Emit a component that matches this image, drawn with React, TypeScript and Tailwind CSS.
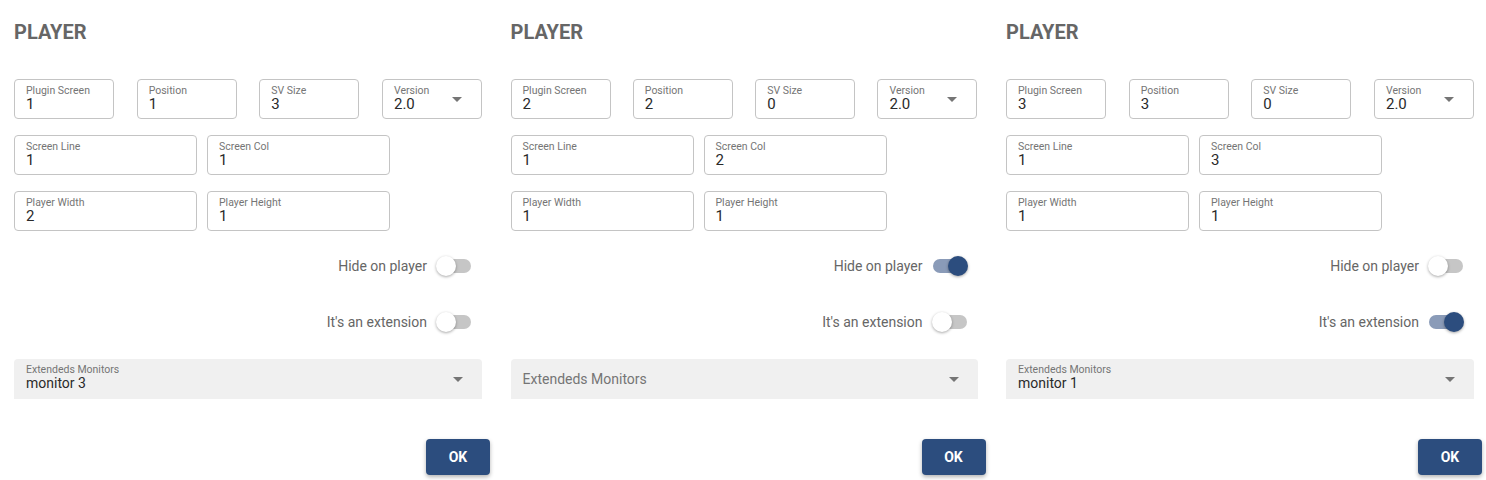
type PlayerConfig = {
  pluginScreen: string;
  position: string;
  svSize: string;
  version: string;
  screenLine: string;
  screenCol: string;
  playerWidth: string;
  playerHeight: string;
  hideOnPlayer: boolean;
  isExtension: boolean;
  monitor: string | null;
};

const players: PlayerConfig[] = [
  {
    pluginScreen: "1",
    position: "1",
    svSize: "3",
    version: "2.0",
    screenLine: "1",
    screenCol: "1",
    playerWidth: "2",
    playerHeight: "1",
    hideOnPlayer: false,
    isExtension: false,
    monitor: "monitor 3",
  },
  {
    pluginScreen: "2",
    position: "2",
    svSize: "0",
    version: "2.0",
    screenLine: "1",
    screenCol: "2",
    playerWidth: "1",
    playerHeight: "1",
    hideOnPlayer: true,
    isExtension: false,
    monitor: null,
  },
  {
    pluginScreen: "3",
    position: "3",
    svSize: "0",
    version: "2.0",
    screenLine: "1",
    screenCol: "3",
    playerWidth: "1",
    playerHeight: "1",
    hideOnPlayer: false,
    isExtension: true,
    monitor: "monitor 1",
  },
];

function ArrowDrop() {
  return (
    <svg viewBox="0 0 24 24" className="h-6 w-6 shrink-0 fill-[#757575]">
      <path d="M7 10l5 5 5-5z" />
    </svg>
  );
}

function Field({
  label,
  value,
  width,
  select = false,
}: {
  label: string;
  value: string;
  width: string;
  select?: boolean;
}) {
  return (
    <div
      className={`${width} flex h-[40px] items-center rounded-[4px] border border-[#c4c4c4] bg-white pl-[11px] pr-[12px]`}
    >
      <div className="flex h-full flex-1 flex-col pt-[5px]">
        <span className="text-[10.5px] leading-[11px] text-[#757575]">{label}</span>
        <span className="text-[15px] leading-[16px] text-[#2a2a2a]">{value}</span>
      </div>
      {select ? <ArrowDrop /> : null}
    </div>
  );
}

function Toggle({ label, on }: { label: string; on: boolean }) {
  return (
    <div className="flex h-[56px] items-center justify-end pr-[11px]">
      <span className="mr-[10px] text-[14px] text-[#666666]">{label}</span>
      <div
        className={`relative h-[14px] w-[34px] rounded-full ${
          on ? "bg-[#8a9bb8]" : "bg-[#c6c6c6]"
        }`}
      >
        <span
          className={`absolute top-[-3px] h-[20px] w-[20px] rounded-full shadow-[0_1px_3px_rgba(0,0,0,0.35)] ${
            on ? "left-[15px] bg-[#2c4d7e]" : "left-[-1px] bg-white"
          }`}
        />
      </div>
    </div>
  );
}

function PlayerPanel({ p }: { p: PlayerConfig }) {
  return (
    <section className="flex flex-col">
      <h2 className="mt-[20px] text-[20px] font-bold leading-[24px] text-[#666666]">
        PLAYER
      </h2>

      <div className="mt-[35px] flex justify-between">
        <Field label="Plugin Screen" value={p.pluginScreen} width="w-[100px]" />
        <Field label="Position" value={p.position} width="w-[100px]" />
        <Field label="SV Size" value={p.svSize} width="w-[100px]" />
        <Field label="Version" value={p.version} width="w-[100px]" select />
      </div>

      <div className="mt-[16px] flex gap-[10px]">
        <Field label="Screen Line" value={p.screenLine} width="w-[183px]" />
        <Field label="Screen Col" value={p.screenCol} width="w-[183px]" />
      </div>

      <div className="mt-[16px] flex gap-[10px]">
        <Field label="Player Width" value={p.playerWidth} width="w-[183px]" />
        <Field label="Player Height" value={p.playerHeight} width="w-[183px]" />
      </div>

      <div className="mt-[7px]">
        <Toggle label="Hide on player" on={p.hideOnPlayer} />
        <Toggle label="It's an extension" on={p.isExtension} />
      </div>

      <div className="mt-[9px] flex h-[40px] items-center rounded-t-[4px] bg-[#f0f0f0] pl-[12px] pr-[12px]">
        {p.monitor ? (
          <div className="flex h-full flex-1 flex-col pt-[5px]">
            <span className="text-[10.5px] leading-[11px] text-[#757575]">
              Extendeds Monitors
            </span>
            <span className="text-[14px] leading-[16px] text-[#2a2a2a]">{p.monitor}</span>
          </div>
        ) : (
          <span className="flex-1 text-[14px] text-[#757575]">Extendeds Monitors</span>
        )}
        <ArrowDrop />
      </div>

      <div className="mt-[40px] -mr-[8px] flex justify-end">
        <button
          type="button"
          className="h-[36px] w-[64px] rounded-[4px] bg-[#2c4d7e] text-[14px] font-bold text-white shadow-[0_2px_4px_rgba(0,0,0,0.3)]"
        >
          OK
        </button>
      </div>
    </section>
  );
}

export default function App() {
  return (
    <main className="min-h-[480px] w-full bg-white pl-[14px] pr-[12px] font-['Roboto',sans-serif]">
      <div className="grid grid-cols-[468px_467px_468px] justify-between">
        {players.map((p, i) => (
          <PlayerPanel key={i} p={p} />
        ))}
      </div>
    </main>
  );
}
